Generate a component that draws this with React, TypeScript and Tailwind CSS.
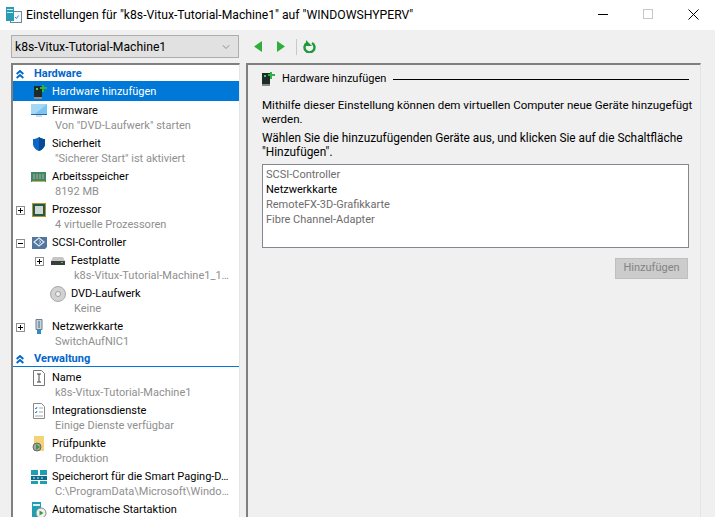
import { FC, ReactNode } from "react"
import { ChevronDown } from "lucide-react"

// Hyper-V settings dialog: left tree of hardware / management items, right detail pane

const AddHardwareIcon = () => (
  <svg width="16" height="16" viewBox="0 0 16 16">
    <rect x="3" y="2" width="8" height="11" fill="#1f2a2a" />
    <rect x="3" y="13" width="8" height="2" fill="#8a8a8a" />
    <rect x="5" y="4" width="2" height="2" fill="#3fd04f" />
    <path d="M11 1h2v2h3v2h-3v3h-2V5H9V3h2z" fill="#2fb344" />
  </svg>
)

const FirmwareIcon = () => (
  <svg width="16" height="16" viewBox="0 0 16 16">
    <rect x="0" y="1" width="16" height="11" fill="#7cc4f0" />
    <path d="M0 1h16L4 11H0z" fill="#a6d8f6" />
    <rect x="0" y="11" width="16" height="1" fill="#1d6fb8" />
    <rect x="5" y="12" width="6" height="2" fill="#d4dade" />
  </svg>
)

const ShieldIcon = () => (
  <svg width="16" height="16" viewBox="0 0 16 16">
    <path d="M8 1c2 1.500 4 2 6 2v5c0 3-3 6-6 7-3-1-6-4-6-7V3c2 0 4-.5 6-2z" fill="#0b66c4" />
    <path d="M8 1c2 1.500 4 2 6 2v5c0 3-3 6-6 7z" fill="#084a94" />
  </svg>
)

const MemoryIcon = () => (
  <svg width="16" height="16" viewBox="0 0 16 16">
    <rect x="0" y="3" width="15" height="10" fill="#3f8a63" />
    <rect x="2" y="5" width="2" height="5" fill="#7f9a8a" />
    <rect x="5" y="5" width="2" height="5" fill="#7f9a8a" />
    <rect x="8" y="5" width="2" height="5" fill="#7f9a8a" />
    <rect x="11" y="5" width="2" height="5" fill="#7f9a8a" />
    <rect x="1" y="12" width="13" height="1" fill="#c9b35a" />
  </svg>
)

const CpuIcon = () => (
  <svg width="14" height="14" viewBox="0 0 14 14">
    <rect x="0" y="0" width="14" height="14" fill="#b8913a" />
    <rect x="1" y="1" width="12" height="12" fill="#1f5c46" />
    <rect x="3" y="3" width="8" height="8" fill="#d2d6d4" />
  </svg>
)

const ScsiIcon = () => (
  <svg width="16" height="16" viewBox="0 0 16 16">
    <path d="M1 2h15v10l-2 2H1z" fill="#52769f" />
    <path d="M8 3l5 4-5 4-5-4z" fill="none" stroke="#e4e8ee" strokeWidth="1.200" />
    <path d="M8 5.500l2 1.500-2 1.500" fill="none" stroke="#c8d2de" />
  </svg>
)

const DiskIcon = () => (
  <svg width="14" height="16" viewBox="0 0 14 16">
    <path d="M2 4h10l2 4H0z" fill="#c6c6c6" />
    <rect x="0" y="8" width="14" height="4" fill="#3c3c3c" />
    <rect x="10" y="9" width="2" height="1" fill="#40d050" />
  </svg>
)

const DvdIcon = () => (
  <svg width="16" height="16" viewBox="0 0 16 16">
    <circle cx="8" cy="8" r="7.500" fill="#d2d2d2" stroke="#a8a8a8" />
    <circle cx="8" cy="8" r="2.500" fill="#f2f2f2" stroke="#a0a0a0" />
  </svg>
)

const NicIcon = () => (
  <svg width="16" height="16" viewBox="0 0 16 16">
    <path d="M5 .5h6v10H5z" fill="#c5d4e0" stroke="#6b7f90" />
    <rect x="7" y="2" width="2" height="7" fill="#8a9cac" />
    <rect x="6" y="11" width="4" height="4" fill="#2a8ccc" />
  </svg>
)

const NameIcon = () => (
  <svg width="16" height="16" viewBox="0 0 16 16">
    <path d="M2.500.500h8l3 3v12h-11z" fill="#fff" stroke="#777" />
    <path d="M6 4h4M8 4v8M6 12h4" fill="none" stroke="#444" />
  </svg>
)

const IntegrationIcon = () => (
  <svg width="16" height="16" viewBox="0 0 16 16">
    <path d="M2.500.500h8l3 3v12h-11z" fill="#fff" stroke="#8a8a8a" />
    <path d="M4 5l1 1 1-2M4 9l1 1 1-2" fill="none" stroke="#2a7fd0" />
    <path d="M8 5h4M8 9h4M4 13h8" fill="none" stroke="#9aa8b4" />
  </svg>
)

const CheckpointIcon = () => (
  <svg width="16" height="16" viewBox="0 0 16 16">
    <path d="M3 0h10v15H3z" fill="#f3d377" />
    <circle cx="6" cy="11" r="4" fill="#a8a8a8" stroke="#666" />
    <path d="M5 8l4 3-4 3z" fill="#3b9b3b" />
  </svg>
)

const SmartPagingIcon = () => (
  <svg width="16" height="16" viewBox="0 0 16 16">
    <rect x="0" y="1" width="7" height="5" fill="#1f9fb4" />
    <rect x="9" y="1" width="7" height="5" fill="#1f9fb4" />
    <rect x="0" y="7" width="16" height="4" fill="#136a88" />
    <path d="M2 9h2M6 9h2M10 9h2" stroke="#d7f0f4" />
    <rect x="0" y="12" width="7" height="3" fill="#1f9fb4" />
    <rect x="9" y="12" width="7" height="3" fill="#1f9fb4" />
  </svg>
)

const AutoStartIcon = () => (
  <svg width="16" height="16" viewBox="0 0 16 16">
    <rect x="1" y="0" width="9" height="15" fill="#1f9fb4" />
    <rect x="2" y="2" width="7" height="2" fill="#d7f0f4" />
    <circle cx="10" cy="11" r="5" fill="#f0f0f0" stroke="#8a8a8a" />
    <path d="M8.500 8.500l4 2.500-4 2.500z" fill="#2fa03a" />
  </svg>
)

const TitleIcon = () => (
  <svg width="16" height="16" viewBox="0 0 16 16">
    <rect x="4.500" y="4.500" width="11" height="11" fill="#f4f8fa" stroke="#6b8a94" />
    <rect x="0" y="0" width="8" height="14" fill="#2a9bb0" />
    <rect x="1" y="2" width="6" height="1" fill="#c8eef2" />
    <rect x="1" y="5" width="6" height="1" fill="#c8eef2" />
    <path d="M9 10l1.500 1.500 2-3" fill="none" stroke="#2a7fd0" />
  </svg>
)

const CollapseIcon = () => (
  <svg width="8" height="9" viewBox="0 0 8 9">
    <path d="M.7 4L4 1l3.300 3M.7 8L4 5l3.300 3" fill="none" stroke="#0066cc" strokeWidth="1.900" />
  </svg>
)

const Expander: FC<{ sign: "+" | "-" }> = ({ sign }) => (
  <span className="relative block w-[9px] h-[9px] border border-[#8e8f8f] bg-white">
    <span className="absolute left-[1px] top-[3px] w-[5px] h-[1px] bg-black" />
    {sign === "+" && <span className="absolute left-[3px] top-[1px] w-[1px] h-[5px] bg-black" />}
  </span>
)

interface ItemProps {
  icon: ReactNode
  label: string
  sub?: string
  sign?: "+" | "-"
  indent?: boolean
  selected?: boolean
}

// indent rows are the children of SCSI-Controller
const TreeItem: FC<ItemProps> = ({ icon, label, sub, sign, indent, selected }) => (
  <div className={`${indent ? "pl-[19px]" : ""} ${sub ? "h-[33px]" : selected ? "h-[19px]" : "h-[18px]"}`}>
    <div className={`flex items-center ${selected ? "h-[19px] pt-[1px] bg-[#0078d7] text-white" : "h-[18px] pt-[2px] text-black"}`}>
      <div className="w-[17px] pl-[3px] flex-shrink-0">{sign && <Expander sign={sign} />}</div>
      <div className="w-[18px] mr-[4px] flex-shrink-0 flex items-center justify-center">{icon}</div>
      <span className="whitespace-nowrap">{label}</span>
    </div>
    {sub && <div className="h-[15px] leading-[14px] pl-[42px] text-[#8f8f8f] whitespace-nowrap">{sub}</div>}
  </div>
)

const SectionHeader: FC<{ label: string }> = ({ label }) => (
  <div className="flex items-center h-[17px] pt-[3px] border-b border-[#0078d7] text-[#0066cc] font-bold">
    <span className="ml-[3px] mr-[10px] flex"><CollapseIcon /></span>
    <span>{label}</span>
  </div>
)

export default function App() {
  return (
    <div className="w-[715px] h-[517px] overflow-hidden bg-[#f0f0f0] text-[11px] text-black font-['Roboto',sans-serif] flex flex-col">
      {/* Title bar */}
      <div className="h-[30px] bg-white flex items-center pl-[6px] flex-shrink-0">
        <TitleIcon />
        <span className="ml-[4px] text-[12.200px] whitespace-nowrap">Einstellungen für "k8s-Vitux-Tutorial-Machine1" auf "WINDOWSHYPERV"</span>
        <div className="ml-auto flex items-center h-full pb-[2px]">
          <div className="w-[45px] flex justify-center"><div className="w-[10px] h-[1px] bg-black" /></div>
          <div className="w-[45px] flex justify-center"><div className="w-[10px] h-[10px] border border-[#c8c8c8]" /></div>
          <div className="w-[45px] flex justify-center">
            <svg className="ml-[1px]" width="11" height="11" viewBox="0 0 11 11"><path d="M.5.500l10 10M10.500.500l-10 10" stroke="#000" fill="none" /></svg>
          </div>
        </div>
      </div>

      {/* Toolbar */}
      <div className="h-[33px] flex items-center pl-[11px] flex-shrink-0">
        <div className="w-[228px] h-[23px] border border-[#adadad] bg-[#e1e1e1] flex items-center pl-[3px] pr-[6px] justify-between">
          <span className="pt-[1px] text-[12.200px] whitespace-nowrap">k8s-Vitux-Tutorial-Machine1</span>
          <ChevronDown className="w-[12px] h-[12px] text-[#555]" strokeWidth={1.200} />
        </div>
        <svg className="ml-[15px]" width="8" height="11" viewBox="0 0 8 11"><path d="M8 0v11L0 5.500z" fill="#2fae3c" /></svg>
        <svg className="ml-[15px]" width="8" height="11" viewBox="0 0 8 11"><path d="M0 0v11l8-5.500z" fill="#2fae3c" /></svg>
        <div className="ml-[11px] w-[1px] h-[16px] bg-[#c8c8c8]" />
        <svg className="ml-[6px]" width="13" height="13" viewBox="0 0 13 13">
          <path d="M4 3a5 5 0 1 0 5 0" fill="none" stroke="#1e9a3a" strokeWidth="2.400" />
          <path d="M3 0v6h6z" fill="#1e9a3a" />
        </svg>
      </div>

      {/* Body */}
      <div className="flex flex-1 min-h-0 pl-[11px] gap-[6px]">
        {/* Tree */}
        <div className="w-[229px] flex-shrink-0 bg-white border-2 border-b-0 border-r-[1px] border-[#808080] border-r-[#e4e4e4] overflow-hidden">
          <SectionHeader label="Hardware" />
          <TreeItem selected icon={<AddHardwareIcon />} label="Hardware hinzufügen" />
          <TreeItem icon={<FirmwareIcon />} label="Firmware" sub={'Von "DVD-Laufwerk" starten'} />
          <TreeItem icon={<ShieldIcon />} label="Sicherheit" sub={'"Sicherer Start" ist aktiviert'} />
          <TreeItem icon={<MemoryIcon />} label="Arbeitsspeicher" sub="8192 MB" />
          <TreeItem sign="+" icon={<CpuIcon />} label="Prozessor" sub="4 virtuelle Prozessoren" />
          <TreeItem sign="-" icon={<ScsiIcon />} label="SCSI-Controller" />
          <TreeItem indent sign="+" icon={<DiskIcon />} label="Festplatte" sub="k8s-Vitux-Tutorial-Machine1_1…" />
          <TreeItem indent icon={<DvdIcon />} label="DVD-Laufwerk" sub="Keine" />
          <TreeItem sign="+" icon={<NicIcon />} label="Netzwerkkarte" sub="SwitchAufNIC1" />
          <SectionHeader label="Verwaltung" />
          <div className="mt-[1px]">
            <TreeItem icon={<NameIcon />} label="Name" sub="k8s-Vitux-Tutorial-Machine1" />
          </div>
          <TreeItem icon={<IntegrationIcon />} label="Integrationsdienste" sub="Einige Dienste verfügbar" />
          <TreeItem icon={<CheckpointIcon />} label="Prüfpunkte" sub="Produktion" />
          <TreeItem icon={<SmartPagingIcon />} label="Speicherort für die Smart Paging-D…" sub="C:\ProgramData\Microsoft\Windo…" />
          <TreeItem icon={<AutoStartIcon />} label="Automatische Startaktion" />
        </div>

        {/* Detail pane */}
        <div className="w-[455px] flex-shrink-0 border-t-2 border-l-2 border-r border-[#808080] border-r-[#e4e4e4] pl-[14px] pr-[11px] pt-[4px]">
          <div className="flex items-center h-[20px]">
            <span className="-ml-[3px] flex"><AddHardwareIcon /></span>
            <span className="ml-[7px] whitespace-nowrap">Hardware hinzufügen</span>
            <div className="ml-[7px] flex-1 h-[1px] bg-black" />
          </div>
          <p className="mt-[9px] -mr-[6px] leading-[14px] text-[11.550px]">Mithilfe dieser Einstellung können dem virtuellen Computer neue Geräte hinzugefügt werden.</p>
          <p className="mt-[5px] leading-[14px] text-[11.850px]">Wählen Sie die hinzuzufügenden Geräte aus, und klicken Sie auf die Schaltfläche "Hinzufügen".</p>
          <div className="mt-[5px] h-[84px] bg-white border border-[#828790] pl-[3px] pt-[2px] leading-[15px]">
            <div className="text-[#6d6d6d]">SCSI-Controller</div>
            <div>Netzwerkkarte</div>
            <div className="text-[#6d6d6d]">RemoteFX-3D-Grafikkarte</div>
            <div className="text-[#6d6d6d]">Fibre Channel-Adapter</div>
          </div>
          <div className="mt-[10px] flex justify-end">
            <div className="w-[73px] h-[21px] mr-[1px] bg-[#cccccc] border border-[#bfbfbf] text-[#838383] flex items-center justify-center">Hinzufügen</div>
          </div>
        </div>
      </div>
    </div>
  )
}
